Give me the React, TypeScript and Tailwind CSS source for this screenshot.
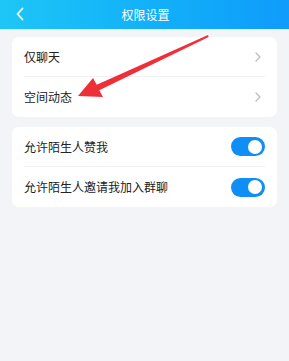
import React from 'react';

const font = { fontFamily: '"Noto Sans CJK SC", "Noto Sans", sans-serif' };

const Chevron = () => (
  <svg width="6" height="10" viewBox="0 0 6 10" className="text-[#b8bcc4] mr-[4px]">
    <path d="M1 1l4 4-4 4" fill="none" stroke="currentColor" strokeWidth="1.2" strokeLinecap="round" strokeLinejoin="round" />
  </svg>
);

const Toggle = () => (
  <div className="w-[34px] h-[19px] rounded-full bg-[#0f8ef5] flex items-center justify-end pr-[3px]">
    <div className="w-[14px] h-[14px] rounded-full bg-white" />
  </div>
);

const Row = ({ label, right, last }: { label: string; right: React.ReactNode; last?: boolean }) => (
  <div className="h-[40px] flex items-center px-[12px]">
    <div className={`flex-1 h-full flex items-center justify-between ${last ? '' : 'border-b border-[#f0f1f3]'}`}>
      <span className="text-[12px] text-[#222]">{label}</span>
      {right}
    </div>
  </div>
);

export default function App() {
  return (
    <div className="relative w-[289px] h-[361px] bg-[#f3f4f7] overflow-hidden" style={font}>
      <div className="h-[29px] bg-gradient-to-r from-[#1ec6f6] to-[#0f9cfb] flex items-center relative">
        <svg width="10" height="14" viewBox="0 0 10 14" className="absolute left-[15px] top-[7px]">
          <path d="M7.5 1.5L2.5 7l5 5.5" fill="none" stroke="white" strokeWidth="1.8" strokeLinecap="round" strokeLinejoin="round" />
        </svg>
        <div className="flex-1 text-center text-white text-[12px] pl-[2px]">权限设置</div>
      </div>

      <div className="px-[12px] pt-[8px] flex flex-col gap-[10px]">
        <div className="bg-white rounded-[7px]">
          <Row label="仅聊天" right={<Chevron />} />
          <Row label="空间动态" right={<Chevron />} last />
        </div>
        <div className="bg-white rounded-[7px]">
          <Row label="允许陌生人赞我" right={<Toggle />} />
          <Row label="允许陌生人邀请我加入群聊" right={<Toggle />} last />
        </div>
      </div>

      <svg className="absolute left-0 top-0" width="289" height="361" viewBox="0 0 289 361">
        <polygon
          points="208,35 96.7,84.8 93,78 78,96 103,97 99.3,90.2 208.6,36.9"
          fill="#ef2f37"
        />
      </svg>
    </div>
  );
}
